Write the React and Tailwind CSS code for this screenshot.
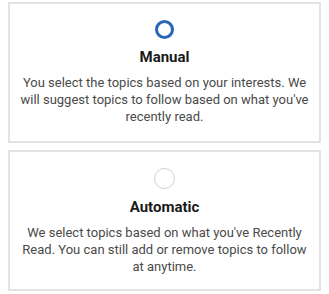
import React, { useState } from 'react';

const OPTIONS = [
  {
    id: 'manual',
    title: 'Manual',
    text: "You select the topics based on your interests. We will suggest topics to follow based on what you've recently read.",
  },
  {
    id: 'auto',
    title: 'Automatic',
    text: "We select topics based on what you've Recently Read. You can still add or remove topics to follow at anytime.",
  },
];

export default function App() {
  const [selected, setSelected] = useState('manual');

  return (
    <div className="w-[329px] h-[294px] bg-white flex flex-col gap-[7px] px-2 pt-[2px]" style={{ fontFamily: 'Roboto, sans-serif' }}>
      {OPTIONS.map((opt) => (
        <button
          key={opt.id}
          onClick={() => setSelected(opt.id)}
          className="w-[313px] h-[141px] border-2 border-[#e3e3e3] flex flex-col items-center pt-[16px] px-2 text-center"
        >
          {selected === opt.id ? (
            <span className="w-[19px] h-[19px] rounded-full border-[3px] border-[#2a66b8]" />
          ) : (
            <span className="w-[21px] h-[21px] rounded-full border border-[#cfcfcf]" />
          )}
          <span className="mt-[8px] text-[15px] font-bold text-[#1a1a1a] leading-[20px]">{opt.title}</span>
          <span className="mt-[7px] text-[13px] text-[#4a4a4a] leading-[17px]">{opt.text}</span>
        </button>
      ))}
    </div>
  );
}
